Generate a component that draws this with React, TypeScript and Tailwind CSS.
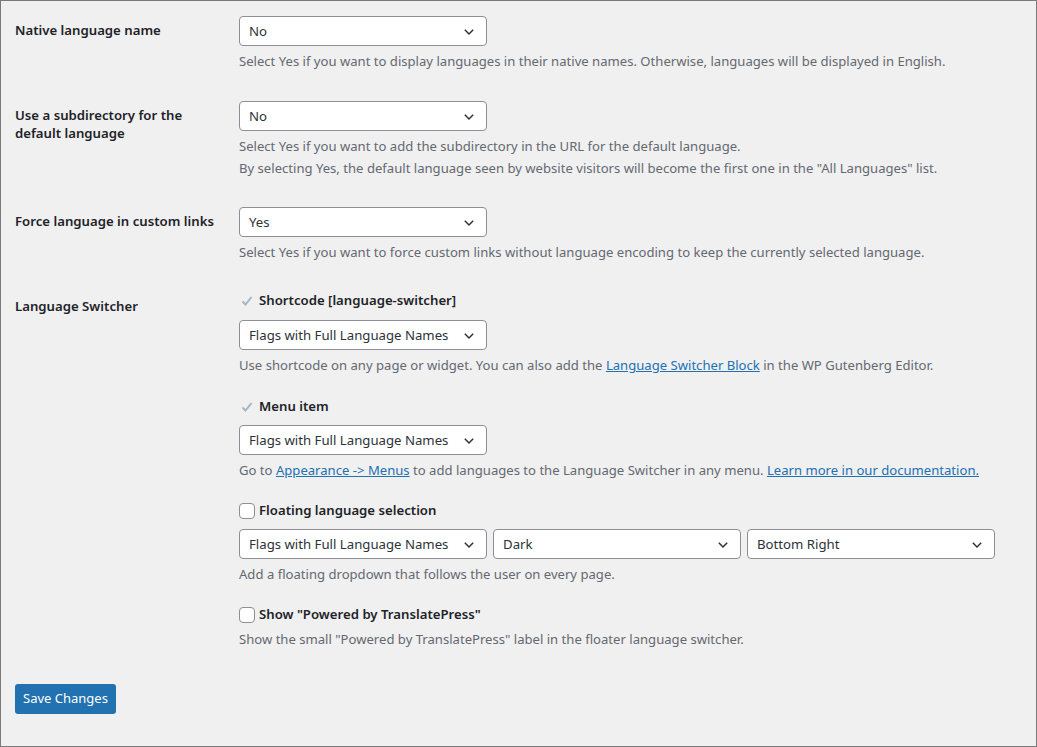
import React from "react";

const Chevron = () => (
  <svg width="12" height="8" viewBox="0 0 12 8" className="shrink-0">
    <path d="M1.8 1.8 L6 6 L10.2 1.8" fill="none" stroke="#2c3338" strokeWidth="1.5" />
  </svg>
);

const Select = ({ value }: { value: string }) => (
  <div className="flex h-[30px] w-[248px] items-center justify-between rounded-[4px] border border-[#8c8f94] bg-white pl-[9px] pr-[11px] pt-[1px] text-[13.2px] text-[#2c3338]">
    <span>{value}</span>
    <Chevron />
  </div>
);

const Desc = ({ children, className = "" }: { children: React.ReactNode; className?: string }) => (
  <p className={`text-[13.1px] leading-[22px] text-[#646970] ${className}`}>{children}</p>
);

const Check = () => (
  <svg width="16" height="16" viewBox="0 0 16 16" className="shrink-0">
    <path d="M3.5 8.5 L6.5 11.5 L12.5 4" fill="none" stroke="#a3b5c6" strokeWidth="2" />
  </svg>
);

const Box = () => <span className="box-border inline-block h-[16px] w-[16px] shrink-0 rounded-[4px] border border-[#8c8f94] bg-white" />;

const Label = ({ children }: { children: React.ReactNode }) => (
  <div className="w-[224px] shrink-0 pt-[5px] pr-4 text-[13.2px] font-semibold leading-[18px] text-[#1d2327]">{children}</div>
);

const A = ({ children }: { children: React.ReactNode }) => (
  <a className="text-[#2271b1] underline">{children}</a>
);

const CheckRow = ({ checked, text, className = "" }: { checked: boolean; text: string; className?: string }) => (
  <div className={`flex h-[22px] items-center gap-[4px] text-[13.2px] font-semibold text-[#1d2327] ${className}`}>
    {checked ? <Check /> : <Box />}
    <span>{text}</span>
  </div>
);

export default function App() {
  return (
    <div
      className="box-border h-[747px] w-[1037px] border border-[#7a7a7a] bg-[#f0f0f1] pl-[14px] pt-[15px]"
      style={{ fontFamily: '"Noto Sans", "Open Sans", sans-serif' }}
    >
      <div className="flex">
        <Label>Native language name</Label>
        <div>
          <Select value="No" />
          <Desc className="mt-1">Select Yes if you want to display languages in their native names. Otherwise, languages will be displayed in English.</Desc>
        </div>
      </div>

      <div className="mt-[29px] flex">
        <Label>Use a subdirectory for the default language</Label>
        <div>
          <Select value="No" />
          <Desc className="mt-1">
            Select Yes if you want to add the subdirectory in the URL for the default language.
            <br />
            By selecting Yes, the default language seen by website visitors will become the first one in the "All Languages" list.
          </Desc>
        </div>
      </div>

      <div className="mt-[28px] flex">
        <Label>Force language in custom links</Label>
        <div>
          <Select value="Yes" />
          <Desc className="mt-1">Select Yes if you want to force custom links without language encoding to keep the currently selected language.</Desc>
        </div>
      </div>

      <div className="mt-[27px] flex">
        <div className="w-[224px] shrink-0 pt-[7px] text-[13.2px] font-semibold leading-[18px] text-[#1d2327]">Language Switcher</div>
        <div className="flex flex-col">
          <CheckRow checked text="Shortcode [language-switcher]" />
          <div className="mt-[8px]">
            <Select value="Flags with Full Language Names" />
          </div>
          <Desc className="mt-1">
            Use shortcode on any page or widget. You can also add the <A>Language Switcher Block</A> in the WP Gutenberg Editor.
          </Desc>

          <CheckRow checked text="Menu item" className="mt-[20px]" />
          <div className="mt-[7px]">
            <Select value="Flags with Full Language Names" />
          </div>
          <Desc className="mt-1">
            Go to <A>Appearance -&gt; Menus</A> to add languages to the Language Switcher in any menu. <A>Learn more in our documentation.</A>
          </Desc>

          <CheckRow checked={false} text="Floating language selection" className="mt-[19px]" />
          <div className="mt-[7px] flex gap-[6px]">
            <Select value="Flags with Full Language Names" />
            <Select value="Dark" />
            <Select value="Bottom Right" />
          </div>
          <Desc className="mt-1">Add a floating dropdown that follows the user on every page.</Desc>

          <CheckRow checked={false} text={'Show "Powered by TranslatePress"'} className="mt-[19px]" />
          <Desc className="mt-[2px]">Show the small "Powered by TranslatePress" label in the floater language switcher.</Desc>
        </div>
      </div>

      <button className="mt-[34px] flex h-[30px] items-center rounded-[3px] bg-[#2271b1] px-[8px] text-[13px] text-white">
        Save Changes
      </button>
    </div>
  );
}
